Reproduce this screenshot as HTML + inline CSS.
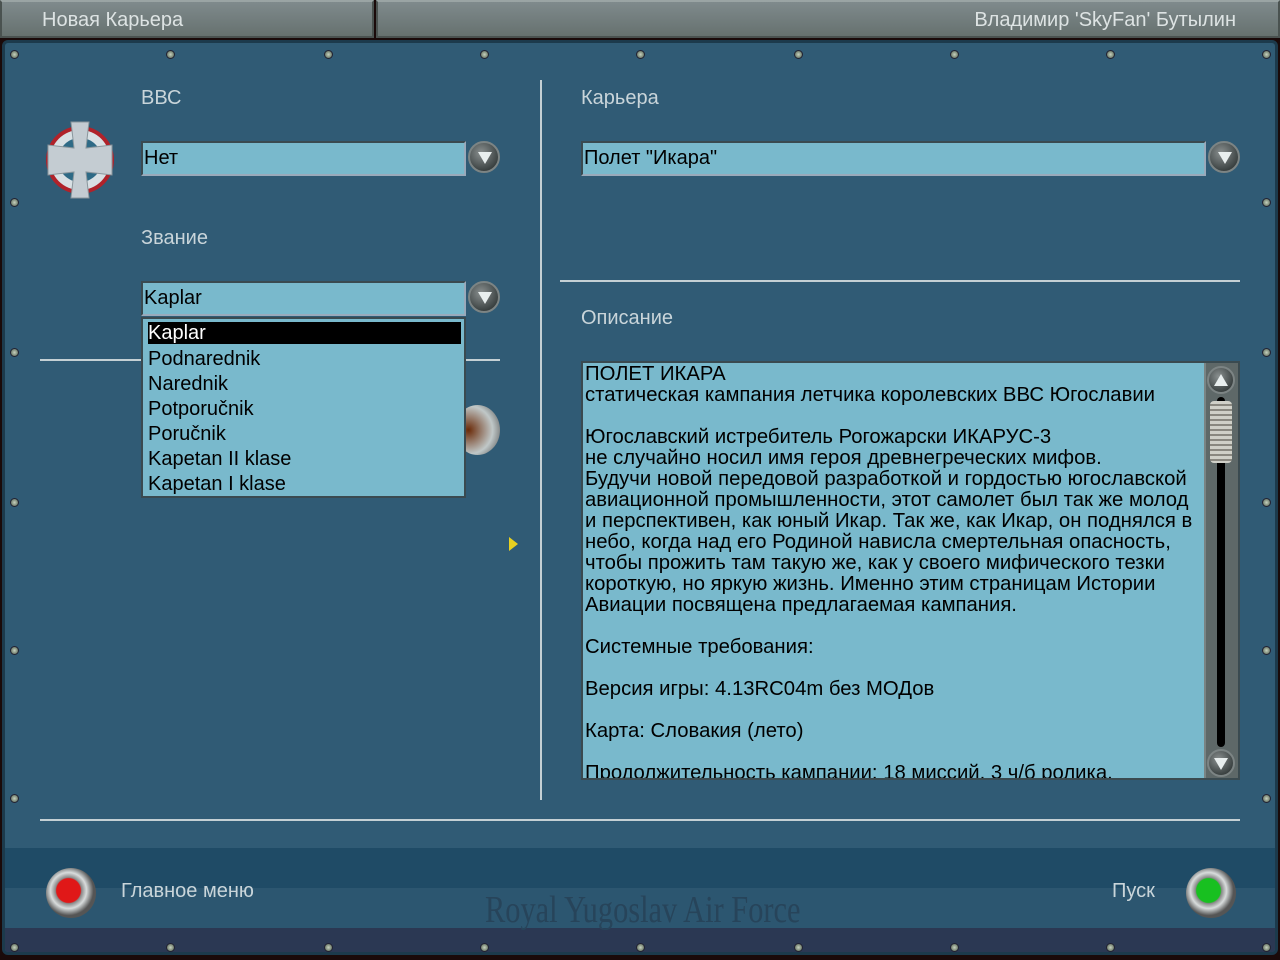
<!DOCTYPE html>
<html><head><meta charset="utf-8"><style>
*{margin:0;padding:0;box-sizing:border-box}
body{width:1280px;height:960px;overflow:hidden;background:#1a0a0a;font-family:"Liberation Sans",sans-serif;position:relative}
.abs{position:absolute}
.tab{background:linear-gradient(#7f8a8c,#66716f);border:2px solid #4a5250;border-top-color:#9aa4a4;color:#dde3e3;font-size:20px;height:38px;line-height:36px}
.panel{left:2px;top:40px;width:1276px;height:915px;background:#305b75;border:3px solid #1c3a4c;border-radius:6px;overflow:hidden}
.lbl{color:#c9d5da;font-size:20px}
.inp{background:#79b9cc;border:2px solid #3a4a50;border-right-color:#9ab;border-bottom-color:#9ab;color:#000;font-size:20px;padding-left:1px;line-height:30px}
.btn{width:32px;height:32px;border-radius:50%;background:radial-gradient(circle at 40% 35%,#8a9090,#3d4444 70%,#222);border:2px solid #7c8484}
.btn:after{content:"";position:absolute;left:8px;top:9px;border-left:7px solid transparent;border-right:7px solid transparent;border-top:12px solid #e8eeee}
.up:after{border-top:0;border-bottom:12px solid #e8eeee;top:6px;left:5px}
.dn:after{left:5px;top:7px}
.line{background:#c4d0d4;height:2px}
.screw{width:9px;height:9px;border-radius:50%;background:radial-gradient(circle,#c8d2c0,#4a5a48);border:1px solid #223}
.txt{color:#000;font-size:20.3px;line-height:21px}
</style></head><body>
<div class="abs tab" style="left:0;top:0;width:374px;padding-left:40px">Новая Карьера</div>
<div class="abs tab" style="left:376px;top:0;width:904px;text-align:right;padding-right:42px">Владимир 'SkyFan' Бутылин</div>
<div class="abs panel">
 <div class="abs" style="left:0;top:805px;width:1276px;height:80px;background:#1f4b66"></div>
 <div class="abs" style="left:0;top:845px;width:1276px;height:40px;background:#2c5670"></div>
 <div class="abs" style="left:0;top:885px;width:1276px;height:30px;background:#2b3853"></div>
 <div class="abs" style="left:480px;top:845px;font-family:'Liberation Serif',serif;font-size:38px;color:#27445a;transform:scaleX(0.8);transform-origin:left">Royal Yugoslav Air Force</div>
</div>
<div class="abs screw" style="left:10px;top:50px"></div><div class="abs screw" style="left:166px;top:50px"></div><div class="abs screw" style="left:324px;top:50px"></div><div class="abs screw" style="left:480px;top:50px"></div><div class="abs screw" style="left:636px;top:50px"></div><div class="abs screw" style="left:794px;top:50px"></div><div class="abs screw" style="left:950px;top:50px"></div><div class="abs screw" style="left:1106px;top:50px"></div><div class="abs screw" style="left:1262px;top:50px"></div>
<div class="abs screw" style="left:10px;top:198px"></div><div class="abs screw" style="left:10px;top:348px"></div><div class="abs screw" style="left:10px;top:498px"></div><div class="abs screw" style="left:10px;top:646px"></div><div class="abs screw" style="left:10px;top:794px"></div>
<div class="abs screw" style="left:1262px;top:198px"></div><div class="abs screw" style="left:1262px;top:348px"></div><div class="abs screw" style="left:1262px;top:498px"></div><div class="abs screw" style="left:1262px;top:646px"></div><div class="abs screw" style="left:1262px;top:794px"></div>
<div class="abs screw" style="left:10px;top:943px"></div><div class="abs screw" style="left:166px;top:943px"></div><div class="abs screw" style="left:324px;top:943px"></div><div class="abs screw" style="left:480px;top:943px"></div><div class="abs screw" style="left:636px;top:943px"></div><div class="abs screw" style="left:794px;top:943px"></div><div class="abs screw" style="left:950px;top:943px"></div><div class="abs screw" style="left:1106px;top:943px"></div><div class="abs screw" style="left:1262px;top:943px"></div>

<svg class="abs" style="left:40px;top:120px" width="80" height="80" viewBox="0 0 80 80">
<circle cx="40" cy="40" r="34" fill="#b0222a"/><circle cx="40" cy="40" r="30" fill="#d8e0e4"/><circle cx="40" cy="40" r="22" fill="#2e6a86"/>
<path d="M31 2h18l-3 26 26-3v30l-26-3 3 26H31l3-26-26 3V25l26 3z" fill="#c4ccd2" stroke="#8a969c"/>
</svg>

<div class="abs lbl" style="left:141px;top:87px">ВВС</div>
<div class="abs inp" style="left:141px;top:141px;width:325px;height:35px">Нет</div>
<div class="abs btn" style="left:468px;top:141px"></div>
<div class="abs lbl" style="left:141px;top:227px">Звание</div>
<div class="abs line" style="left:40px;top:359px;width:460px"></div>
<div class="abs" style="left:455px;top:405px;width:45px;height:50px;border-radius:50%;background:radial-gradient(circle at 30% 50%,#6a2a08,#c0c8c8 60%,#444)"></div>
<div class="abs inp" style="left:141px;top:281px;width:325px;height:35px">Kaplar</div>
<div class="abs btn" style="left:468px;top:281px"></div>
<div class="abs" style="left:141px;top:317px;width:325px;height:181px;background:#79b9cc;border:2px solid #3a4a50;font-size:20px;line-height:25px;padding:3px 0 0 5px;color:#000">
<div style="background:#000;color:#fff;width:313px;height:22px;line-height:22px;margin-bottom:3px">Kaplar</div>
Podnarednik<br>Narednik<br>Potporučnik<br>Poručnik<br>Kapetan II klase<br>Kapetan I klase</div>
<div class="abs" style="left:509px;top:537px;border-top:7px solid transparent;border-bottom:7px solid transparent;border-left:9px solid #e8d020"></div>

<div class="abs" style="left:540px;top:80px;width:2px;height:720px;background:#c4d0d4"></div>
<div class="abs lbl" style="left:581px;top:87px">Карьера</div>
<div class="abs inp" style="left:581px;top:141px;width:625px;height:35px">Полет "Икара"</div>
<div class="abs btn" style="left:1208px;top:141px"></div>
<div class="abs line" style="left:560px;top:280px;width:680px"></div>
<div class="abs lbl" style="left:581px;top:307px">Описание</div>
<div class="abs" style="left:581px;top:361px;width:659px;height:419px;background:#79b9cc;border:2px solid #3a4a50;overflow:hidden">
<div class="txt" style="padding:1px 0 0 2px;width:620px;white-space:nowrap">ПОЛЕТ ИКАРА<br>статическая кампания летчика королевских ВВС Югославии<br><br>Югославский истребитель Рогожарски ИКАРУС-3<br>не случайно носил имя героя древнегреческих мифов.<br>Будучи новой передовой разработкой и гордостью югославской<br>авиационной промышленности, этот самолет был так же молод<br>и перспективен, как юный Икар. Так же, как Икар, он поднялся в<br>небо, когда над его Родиной нависла смертельная опасность,<br>чтобы прожить там такую же, как у своего мифического тезки<br>короткую, но яркую жизнь. Именно этим страницам Истории<br>Авиации посвящена предлагаемая кампания.<br><br>Системные требования:<br><br>Версия игры: 4.13RC04m без МОДов<br><br>Карта: Словакия (лето)<br><br>Продолжительность кампании: 18 миссий, 3 ч/б ролика.</div>
<div class="abs" style="left:621px;top:0;width:34px;height:415px;background:#5e6868;border-left:2px solid #7a8484"></div>
<div class="abs btn up" style="left:624px;top:3px;width:28px;height:28px"></div>
<div class="abs" style="left:634px;top:34px;width:8px;height:350px;background:#000;border-radius:4px"></div>
<div class="abs" style="left:627px;top:38px;width:22px;height:62px;background:repeating-linear-gradient(#d0d0c8 0 3px,#8a8880 3px 5px);border-radius:4px"></div>
<div class="abs btn dn" style="left:624px;top:386px;width:28px;height:28px"></div>
</div>
<div class="abs line" style="left:40px;top:819px;width:1200px"></div>

<div class="abs" style="left:46px;top:868px;width:50px;height:50px;border-radius:50%;background:radial-gradient(circle at 45% 45%,#e01818 0 12px,#888 13px,#d8dcdc 18px,#555 25px)"></div>
<div class="abs lbl" style="left:121px;top:880px">Главное меню</div>
<div class="abs lbl" style="left:1112px;top:880px">Пуск</div>
<div class="abs" style="left:1186px;top:868px;width:50px;height:50px;border-radius:50%;background:radial-gradient(circle at 45% 45%,#18c020 0 12px,#888 13px,#d8dcdc 18px,#555 25px)"></div>
</body></html>
